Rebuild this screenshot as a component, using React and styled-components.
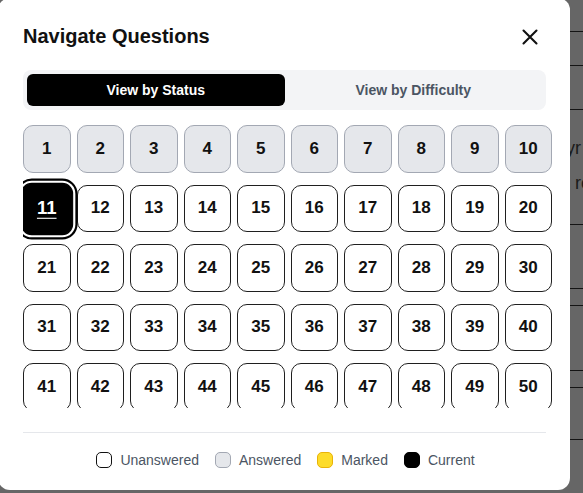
import React, { useState } from "react";
import styled, { createGlobalStyle } from "styled-components";

const Global = createGlobalStyle`
  html, body { margin: 0; padding: 0; }
  body {
    font-family: "Liberation Sans", Arial, sans-serif;
    background: #666666;
    width: 583px;
    height: 493px;
    overflow: hidden;
  }
`;

const Page = styled.div`
  width: 583px;
  height: 493px;
  background: #666666;
  overflow: hidden;
  display: flex;
  flex-direction: column;
`;

const PageRow = styled.div`
  height: ${(p) => p.$h}px;
  flex: none;
  box-sizing: border-box;
  border-bottom: ${(p) => (p.$line ? "1.5px solid #141414" : "none")};
  display: flex;
  align-items: center;
  padding-left: ${(p) => p.$indent || 0}px;
  color: #1a1a1a;
  font-size: 18px;
  white-space: nowrap;
`;

const Modal = styled.div`
  position: fixed;
  top: -2px;
  left: -2px;
  width: 572px;
  box-sizing: border-box;
  background: #ffffff;
  border-radius: 12px;
  padding: 24px 24px 20px 25px;
  display: flex;
  flex-direction: column;
`;

const Header = styled.div`
  display: flex;
  align-items: center;
  justify-content: space-between;
  height: 28px;
  margin-bottom: 20px;
`;

const Title = styled.h2`
  margin: 0;
  font-size: 20px;
  font-weight: 700;
  color: #111111;
  line-height: 28px;
`;

const CloseButton = styled.button`
  border: none;
  background: none;
  padding: 0;
  width: 24px;
  height: 24px;
  display: flex;
  align-items: center;
  justify-content: center;
  margin-right: 4px;
  margin-top: 2px;
  cursor: pointer;
  color: #111;
`;

const Tabs = styled.div`
  display: grid;
  grid-template-columns: 1fr 1fr;
  background: #f3f4f6;
  border-radius: 8px;
  padding: 4px;
  height: 40px;
  box-sizing: border-box;
`;

const Tab = styled.button`
  border: none;
  border-radius: 6px;
  font-family: inherit;
  font-size: 14px;
  font-weight: 700;
  background: ${(p) => (p.$active ? "#000000" : "transparent")};
  color: ${(p) => (p.$active ? "#ffffff" : "#4b5563")};
  cursor: pointer;
`;

const GridScroll = styled.div`
  margin-top: 12px;
  margin-right: -6px;
  height: 286px;
  padding-top: 3px;
  box-sizing: border-box;
  overflow: hidden;
`;

const Grid = styled.div`
  display: grid;
  grid-template-columns: repeat(10, 1fr);
  column-gap: 6px;
  row-gap: 12px;
`;

const NumButton = styled.button`
  aspect-ratio: 1 / 1;
  box-sizing: border-box;
  border-radius: 10px;
  font-family: inherit;
  font-size: 17px;
  font-weight: 700;
  padding: 0;
  cursor: pointer;
  border: 1px solid
    ${(p) =>
      p.$status === "answered" ? "#a3a8b3" : p.$status === "current" ? "#000" : "#1f1f1f"};
  background: ${(p) =>
    p.$status === "answered" ? "#e5e7eb" : p.$status === "current" ? "#000000" : "#ffffff"};
  color: ${(p) => (p.$status === "current" ? "#ffffff" : "#111111")};
  text-decoration: ${(p) => (p.$status === "current" ? "underline" : "none")};
  text-underline-offset: 3px;
  transform: ${(p) => (p.$status === "current" ? "scale(1.09)" : "none")};
  box-shadow: ${(p) =>
    p.$status === "current" ? "0 0 0 2px #ffffff, 0 0 0 4px #000000" : "none"};
`;

const Divider = styled.div`
  margin-top: 24px;
  border-top: 1px solid #e5e7eb;
`;

const Legend = styled.div`
  display: flex;
  justify-content: center;
  gap: 16px;
  padding-top: 17px;
  margin-left: 2px;
`;

const LegendItem = styled.div`
  display: flex;
  align-items: center;
  gap: 8px;
  font-size: 14px;
  line-height: 20px;
  color: #4b5563;
`;

const Swatch = styled.span`
  width: 16px;
  height: 16px;
  box-sizing: border-box;
  border-radius: 5px;
  border: 1px solid ${(p) => p.$border};
  background: ${(p) => p.$bg};
`;

const legend = [
  { label: "Unanswered", bg: "#ffffff", border: "#111111" },
  { label: "Answered", bg: "#e5e7eb", border: "#a3a8b3" },
  { label: "Marked", bg: "#fddc2a", border: "#e9b308" },
  { label: "Current", bg: "#000000", border: "#000000" },
];

function statusOf(n) {
  if (n <= 10) return "answered";
  if (n === 11) return "current";
  return "unanswered";
}

export default function App() {
  const [tab, setTab] = useState("status");
  const nums = Array.from({ length: 50 }, (_, i) => i + 1);
  return (
    <>
      <Global />
      <Page>
        <PageRow $h={32} $line />
        <PageRow $h={34} $line />
        <PageRow $h={44} $line />
        <PageRow $h={20} />
        <PageRow $h={36} $indent={566}>
          yr
        </PageRow>
        <PageRow $h={34} $indent={575}>
          re
        </PageRow>
        <PageRow $h={25} $line />
        <PageRow $h={64} $line />
        <PageRow $h={17} $line />
        <PageRow $h={65} $line />
        <PageRow $h={17} $line />
        <PageRow $h={52} $line />
        <PageRow $h={54} />
      </Page>
      <Modal>
        <Header>
          <Title>Navigate Questions</Title>
          <CloseButton aria-label="Close">
            <svg width="20" height="20" viewBox="0 0 20 20" fill="none">
              <path
                d="M3.5 3.5L16.5 16.5M16.5 3.5L3.5 16.5"
                stroke="#111"
                strokeWidth="2.1"
                strokeLinecap="round"
              />
            </svg>
          </CloseButton>
        </Header>
        <Tabs>
          <Tab $active={tab === "status"} onClick={() => setTab("status")}>
            View by Status
          </Tab>
          <Tab $active={tab === "difficulty"} onClick={() => setTab("difficulty")}>
            View by Difficulty
          </Tab>
        </Tabs>
        <GridScroll>
          <Grid>
            {nums.map((n) => (
              <NumButton key={n} $status={statusOf(n)}>
                {n}
              </NumButton>
            ))}
          </Grid>
        </GridScroll>
        <Divider />
        <Legend>
          {legend.map((l) => (
            <LegendItem key={l.label}>
              <Swatch $bg={l.bg} $border={l.border} />
              {l.label}
            </LegendItem>
          ))}
        </Legend>
      </Modal>
    </>
  );
}
